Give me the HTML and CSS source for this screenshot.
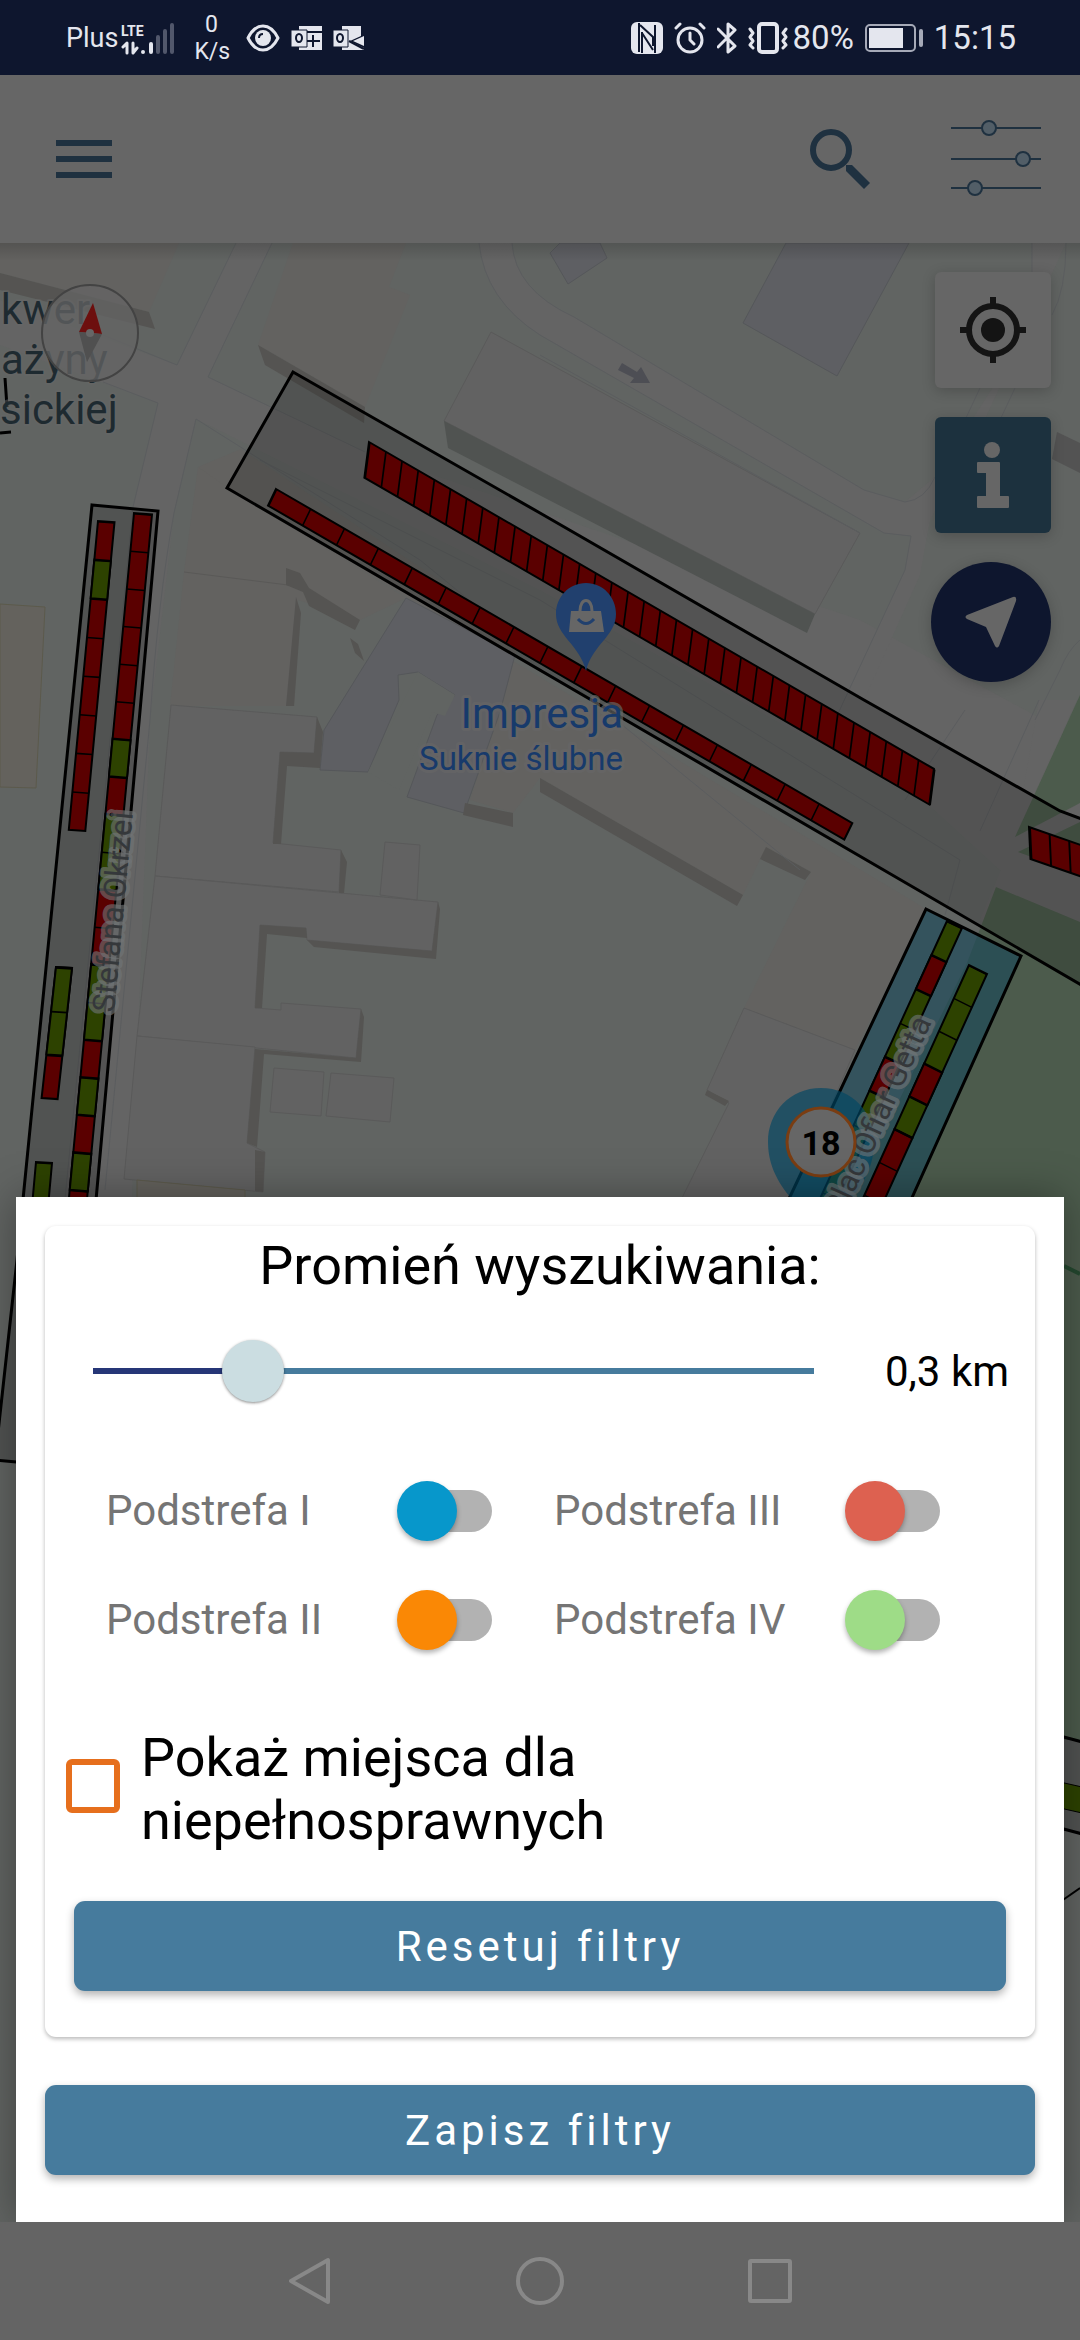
FILE: index.html
```html
<!DOCTYPE html>
<html lang="pl">
<head>
<meta charset="utf-8">
<meta name="viewport" content="width=device-width, initial-scale=1">
<title>Filtry</title>
<link rel="stylesheet" href="styles.css">
</head>
<body>
<div class="screen">
  <div class="status">
    <div class="status-group">
      <span class="carrier">Plus</span>
      <svg class="signal" width="56" height="34" viewBox="0 0 56 34" aria-hidden="true">
        <text x="0" y="15" class="lte">LTE</text>
        <path d="M6 32V22l-4 4M12 22v10l4-5" class="ico-line" stroke-width="3"/>
        <path d="M22 31v0M30 23v8" class="ico-line" stroke-width="4"/>
        <path d="M37 16v15M44 10v21M51 4v27" class="ico-line dim" stroke-width="4"/>
      </svg>
      <span class="speed">0<br>K/s</span>
      <svg class="eye" width="34" height="28" viewBox="0 0 34 28" aria-hidden="true">
        <path d="M2 14C10-2 24-2 32 14 24 30 10 30 2 14Z" class="ico-line" stroke-width="3"/>
        <circle cx="17" cy="14" r="8" fill="#e4e6ee"/>
        <path d="M13 14q0-4 4-4" fill="none" stroke="#0e162e" stroke-width="2"/>
      </svg>
      <svg width="31" height="26" viewBox="0 0 31 26" aria-hidden="true">
        <path d="M8 1h23v24H8z" fill="#e4e6ee"/>
        <path d="M15 7h16M22 10v12M16 16h13" stroke="#0e162e" stroke-width="2"/>
        <path d="M0 5h16v17H0z" fill="#e4e6ee" stroke="#0e162e"/>
        <ellipse cx="8" cy="13" rx="3" ry="4" fill="none" stroke="#0e162e" stroke-width="2"/>
      </svg>
      <svg width="31" height="26" viewBox="0 0 31 26" aria-hidden="true">
        <path d="M9 1h19v10l-11 5 14 7v2H9z" fill="#e4e6ee"/>
        <path d="M31 11v10l-11-5z" fill="#e4e6ee"/>
        <path d="M16 16l15 8" stroke="#0e162e" stroke-width="2"/>
        <path d="M0 5h15v17H0z" fill="#e4e6ee" stroke="#0e162e"/>
        <ellipse cx="7" cy="13" rx="3" ry="4" fill="none" stroke="#0e162e" stroke-width="2"/>
      </svg>
    </div>
    <div class="status-group">
      <svg width="32" height="32" viewBox="0 0 32 32" aria-hidden="true">
        <rect width="32" height="32" rx="6" fill="#e4e6ee"/>
        <path d="M8 1v29M9 3l13 12v9M11 10v21M11 11l11 17M24 31V3" fill="none" stroke="#0e162e" stroke-width="2"/>
      </svg>
      <svg width="32" height="32" viewBox="0 0 32 32" aria-hidden="true">
        <circle cx="16" cy="18" r="12" class="ico-line" stroke-width="3"/>
        <path d="M16 11v7l4 4M2 6l4-4M26 2l4 4" class="ico-line" stroke-width="3"/>
      </svg>
      <svg width="20" height="32" viewBox="0 0 20 32" aria-hidden="true">
        <path d="M1 7l17 17-7 6V2l7 6L1 25" class="ico-line" stroke-width="3"/>
      </svg>
      <svg width="40" height="32" viewBox="0 0 40 32" aria-hidden="true">
        <rect x="11" y="2" width="18" height="28" rx="3" class="ico-line" stroke-width="4"/>
        <path d="M2 7l3 4-3 4 3 4-3 4 3 3M38 7l-3 4 3 4-3 4 3 4-3 3" class="ico-line" stroke-width="3"/>
      </svg>
      <span class="percent">80%</span>
      <svg width="58" height="28" viewBox="0 0 58 28" aria-hidden="true">
        <rect x="1" y="1" width="49" height="26" rx="4" fill="none" stroke="#a6aab8" stroke-width="2"/>
        <rect x="4" y="4" width="34" height="20" fill="#e4e6ee"/>
        <rect x="54" y="5" width="4" height="18" rx="2" fill="#a6aab8"/>
      </svg>
      <time class="clock">15:15</time>
    </div>
  </div>

  <header class="appbar">
    <button class="icon-btn" aria-label="Menu">
      <svg width="56" height="38" viewBox="0 0 56 38"><path d="M0 0h56v6H0zM0 16h56v6H0zM0 32h56v6H0z" fill="#1f3140"/></svg>
    </button>
    <div class="appbar-actions">
      <button class="icon-btn" aria-label="Szukaj">
        <svg width="60" height="60" viewBox="0 0 60 60">
          <circle cx="21" cy="21" r="18" fill="none" stroke="#1f3140" stroke-width="6"/>
          <path d="M36 36h6l18 18-6 6-18-18z" fill="#1f3140"/>
        </svg>
      </button>
      <button class="icon-btn" aria-label="Filtry">
        <svg width="92" height="78" viewBox="0 0 92 78">
          <g fill="#525e67" stroke="#1f3140" stroke-width="2">
            <path d="M1 8h90M1 39h90M1 68h90"/>
            <circle cx="39" cy="8" r="7"/><circle cx="73" cy="39" r="7"/><circle cx="25" cy="68" r="7"/>
          </g>
        </svg>
      </button>
    </div>
  </header>

  <main class="map">
    <svg class="map-canvas" viewBox="0 243 1080 1979" preserveAspectRatio="xMidYMin slice" aria-hidden="true">
      <defs>
        <linearGradient id="barShade" x1="0" y1="0" x2="0" y2="1">
          <stop offset="0" stop-opacity=".15"/><stop offset="1" stop-opacity="0"/>
        </linearGradient>
      </defs>
      <rect y="243" width="1080" height="1979" fill="#616462"/>

      <!-- roads -->
      <g fill="#646464">
        <path d="M236 243L177 365 0 300V345L158 403 133 507 60 1250H130L150 720 174 513 196 419 540 590 930 806 1000 870 1080 915V740L860 620 365 452 208 377 272 243Z"/>
        <path d="M479 243Q485 300 540 335L884 533 911 536 905 570 835 720H855L920 575 930 520 980 430 1066 243H1032L1030 330 935 477 905 502 864 490 574 317Q515 290 512 243Z"/>
        <path d="M1039 700L1015 837 980 920 1080 960V803L1015 837 1077 700Z"/>
      </g>

      <!-- greenery -->
      <g fill="#4c5b4c">
        <path d="M996 887L1080 922V1740H1000L830 1240 967 963Z"/>
        <path d="M1080 695L1015 837 1080 803Z"/>
        <path d="M1080 822L1018 852 1080 875Z"/>
      </g>
      <path d="M1064 1266l16 8" stroke="#24482f" stroke-width="4"/>

      <!-- buildings -->
      <g fill="#636260">
        <path d="M0 243H179L149 312 0 273Z"/>
        <path d="M293 243H406L389 287 410 295 365 407 258 345Z"/>
        <path d="M198 467L241 449 470 600 520 640 470 800 513 813 540 778 743 895 766 847 811 872 744 1008 855 1050 926 909 228 490Z"/>
        <path d="M198 467L184 572 170 706 294 706 298 600 360 620 406 598 228 488Z"/>
      </g>
      <path d="M184 572L288 585" stroke="#5a5957"/>
      <g fill="#626262" stroke="#5a5a5a">
        <path d="M491 332L860 533 815 614 444 421Z"/>
        <path d="M171 705L317 717 314 753 280 752 273 843 341 850 339 892 155 876Z"/>
        <path d="M155 876L438 902 432 951 307 940 306 928 260 925 255 1008 281 1010 281 1003 361 1009 356 1058 137 1036Z"/>
        <path d="M137 1036L255 1047 247 1143 265 1152 263 1192 124 1179Z"/>
        <path d="M385 842l35 3-3 55-37-5zM274 1068l50 4-3 44-51-4zM331 1073l63 5-4 44-64-6z"/>
        <path d="M744 1008L855 1050 790 1200H681L729 1103 707 1090Z"/>
      </g>
      <path d="M0 604L45 607 36 788 0 787ZM137 1180L245 1190V1200H137Z" fill="#64625d" stroke="#5c5a4c"/>
      <g fill="#5e5f63" stroke="#55575a">
        <path d="M786 243H909L837 376 743 323ZM550 253L568 284 607 258 600 243H560Z"/>
        <path d="M406 598L515 655 500 712 464 813 407 797 437 715 455 695 418 672 398 675 399 700 368 772 320 770 324 730Z"/>
      </g>
      <path d="M418 672L455 695 445 716 432 712 399 790 368 772Z" fill="#616462"/>

      <!-- building sides -->
      <g fill="#555452">
        <path d="M0 273L149 312 155 329 0 290ZM258 345L365 407 364 423 265 365Z"/>
        <path d="M286 568L300 573 309 588 360 620 355 630 309 606 303 592 286 585ZM350 638L358 644 364 661 355 653Z"/>
        <path d="M296 597L301 613 294 706H286Z"/>
        <path d="M465 803L513 813V827L463 815ZM540 778L743 895 737 906 540 792ZM766 847L811 872 805 880 760 859Z"/>
        <path d="M280 752L314 753 317 717 323 732 320 768 287 766 281 844H273ZM341 850L347 862 344 893H339Z"/>
        <path d="M260 925L306 928 307 938 267 934 262 1008H255ZM307 940L432 951 438 902 440 909 436 959 314 947ZM255 1049L356 1058 361 1009 364 1017 361 1062 264 1054 257 1147 247 1143ZM255 1150L265 1152 263 1192 255 1191ZM707 1090l22 11-4 5-20-11z"/>
      </g>
      <path d="M444 421L815 614 807 633 448 448Z" fill="#505351"/>
      <path d="M1057 432l23 11v30l-28-14z" fill="#535353"/>

      <!-- kerbs -->
      <g fill="none" stroke="#5b5d5f">
        <path d="M236 243L177 365 103 335M272 243L208 377 365 452M103 382L158 403 133 507 60 1250M196 419L174 513Q158 600 150 720L105 1190"/>
        <path d="M196 419L420 560 800 870M260 460L540 600 960 860 945 915M965 710L905 800M1039 700L980 831"/>
        <path d="M479 243Q485 300 540 335L884 533 911 536 905 570 835 720M512 243Q515 290 574 317L864 490 905 502Q925 500 935 477M1032 243V300M1066 243Q1066 290 1052 315M980 388L965 420M1015 388L1000 420M1080 640Q1068 650 1060 670L1035 720M540 355L860 533"/>
      </g>
      <path d="M622 363l15 9 4-5 9 16-20 0 4-5-16-8z" fill="#4d4e54"/>

      <!-- parking zones -->
      <g stroke="#000" stroke-width="3" fill="rgba(0,0,0,.16)">
        <path d="M293 372L540 513 864 700 1060 811 1090 822V990L624 719 227 488Z"/>
        <path d="M92 505L158 511 72 1467-5 1460 17 1260Z"/>
        <path d="M5 378l2 29M0 433l11-1" fill="none"/>
        <path d="M1060 1736l30 8v92l-30-8z"/>
        <path d="M1060 1902l20-14" fill="none" stroke-width="2"/>
      </g>
      <path d="M926 909L1021 956 901 1222H778Z" fill="rgba(20,70,90,.58)" stroke="#000" stroke-width="3"/>

      <!-- parking bays: one local unit is one bay -->
      <g class="bays" transform="matrix(16.14 9.34 -4.6 35.6 369 442)">
        <path class="red" d="M0 0H35V1H0Z"/><path class="ticks" d="M0 .5H35.1"/>
      </g>
      <g class="bays" transform="matrix(33.9 19.65 -8 16.5 276 489)">
        <path class="red" d="M0 0H17V1H0Z"/><path class="ticks fine" d="M0 .5H17"/>
      </g>
      <g class="bays" transform="matrix(19.6 6.8 1.5 32 1029 827)">
        <path class="red" d="M0 0H3V1H0Z"/><path class="ticks" d="M0 .5H3.1"/>
      </g>
      <g class="bays" transform="matrix(-3.65 38.6 16.5 1.2 98 521)">
        <path class="red" d="M0 0H8V1H0Z"/><path class="green" d="M1 0H2V1H1Z"/><path class="ticks fine" d="M0 .5H8"/>
      </g>
      <g class="bays" transform="matrix(-4.8 43.7 16 1 56 967)">
        <path class="red" d="M0 0H3V1H0Z"/><path class="green" d="M0 0H2V1H0Z"/><path class="ticks fine" d="M0 .5H3"/>
      </g>
      <g class="bays" transform="matrix(-3.6 40 16 1 36 1162)">
        <path class="green" d="M0 0H2V1H0Z"/><path class="ticks fine" d="M0 .5H2"/>
      </g>
      <g class="bays" transform="matrix(-3.57 37.6 18 1.5 134 513)">
        <path class="red" d="M0 0H20V1H0Z"/>
        <path class="green" d="M6 0H7V1H6ZM8 0H10V1H8ZM12 0H14V1H12ZM15 0H16V1H15ZM17 0H18V1H17Z"/>
        <path class="ticks fine" d="M0 .5H20"/>
      </g>
      <g class="bays" transform="matrix(-15.5 33.9 15 7 947 921)">
        <path class="green" d="M0 0H9V1H0Z"/><path class="red" d="M1 0H2V1H1ZM4 0H5V1H4Z"/><path class="ticks fine" d="M0 .5H9"/>
      </g>
      <g class="bays" transform="matrix(-14.9 32.8 18 9 969 965)">
        <path class="green" d="M0 0H5V1H0Z"/><path class="red" d="M3 0H4V1H3ZM5 0H8V1H5Z"/><path class="ticks fine" d="M0 .5H8"/>
      </g>
      <path d="M1060 1782l22 5v26l-22-5z" fill="#2d4200" stroke="#000"/>

      <!-- places -->
      <path d="M821 1088C790 1088 768 1112 768 1142 768 1172 785 1190 792 1200L821 1250 850 1200C858 1190 874 1172 874 1142 874 1112 852 1088 821 1088Z" fill="rgba(0,70,100,.65)"/>
      <g class="street">
        <text transform="translate(114 1013) rotate(-84.6)">Stefana Okrzei</text>
        <text transform="translate(932 1022) rotate(-65.5)" text-anchor="end">Plac Ofiar Getta</text>
      </g>
      <circle cx="821" cy="1142" r="34" fill="#666" stroke="#7a3d12" stroke-width="3"/>
      <text x="821" y="1155" class="count" text-anchor="middle">18</text>

      <path d="M586 583C569 583 556 597 556 614 556 636 580 645 586 671 592 645 616 636 616 614 616 597 603 583 586 583Z" fill="#21406e"/>
      <path d="M571 611h30l3 21h-35z" fill="#666"/>
      <path d="M580 611c0-14 12-14 12 0" fill="none" stroke="#666" stroke-width="3"/>
      <path d="M578 619q8 9 16 0" fill="none" stroke="#21406e" stroke-width="3"/>
      <g class="poi" text-anchor="end">
        <text x="623" y="728" font-size="42">Impresja</text>
        <text x="623" y="770" font-size="33">Suknie ślubne</text>
      </g>
      <g class="square">
        <text x="1" y="324">kwer</text>
        <text x="1" y="374">ażyny</text>
        <text x="0" y="424">sickiej</text>
      </g>

      <circle cx="90" cy="333" r="48" fill="rgba(100,100,100,.75)" stroke="#434343" stroke-width="2"/>
      <path d="M93 303L79 332 102 334Z" fill="#6d0f0e"/>
      <path d="M79 332L102 334 87 362Z" fill="#505050"/>
      <circle cx="90" cy="333" r="4" fill="#666"/>
      <rect y="243" width="1080" height="18" fill="url(#barShade)"/>
    </svg>

    <div class="map-tools">
      <button class="tool tool-locate" aria-label="Moja lokalizacja">
        <svg width="66" height="66" viewBox="0 0 66 66">
          <circle cx="33" cy="33" r="24" fill="none" stroke="#141414" stroke-width="6"/>
          <circle cx="33" cy="33" r="12" fill="#141414"/>
          <path d="M30 0h6v8h-6zM30 58h6v8h-6zM0 30h8v6H0zM58 30h8v6h-8z" fill="#141414"/>
        </svg>
      </button>
      <button class="tool tool-info" aria-label="Informacje">
        <svg width="32" height="66" viewBox="0 0 32 66">
          <circle cx="15" cy="8" r="8" fill="#666"/>
          <path d="M1 20h21q1 0 1 1v33h8q1 0 1 1v10q0 1-1 1H1q-1 0-1-1V55q0-1 1-1h8V31H1q-1 0-1-1v-9q0-1 1-1z" fill="#666"/>
        </svg>
      </button>
      <button class="tool tool-navigate" aria-label="Nawiguj">
        <svg width="52" height="52" viewBox="0 0 52 52">
          <path d="M2 19L48 1q4-1 3 4L34 50q-2 3-4 0L21 31 2 23q-3-2 0-4z" fill="#666"/>
        </svg>
      </button>
    </div>

    <form class="sheet" onsubmit="return false">
      <section class="card">
        <h1 class="title"><label for="radius">Promień wyszukiwania:</label></h1>
        <div class="radius">
          <input class="slider" id="radius" type="range" min="0.1" max="1" step="0.1" value="0.3">
          <output class="radius-value" for="radius">0,3 km</output>
        </div>
        <div class="zones">
          <label class="zone">Podstrefa I <input class="switch blue" type="checkbox" role="switch"></label>
          <label class="zone">Podstrefa III <input class="switch coral" type="checkbox" role="switch"></label>
          <label class="zone">Podstrefa II <input class="switch orange" type="checkbox" role="switch"></label>
          <label class="zone">Podstrefa IV <input class="switch lime" type="checkbox" role="switch"></label>
        </div>
        <label class="disabled-places">
          <input class="tick" type="checkbox">
          <span>Pokaż miejsca dla<br>niepełnosprawnych</span>
        </label>
        <button class="btn btn-reset" type="reset">Resetuj filtry</button>
      </section>
      <button class="btn" type="submit">Zapisz filtry</button>
    </form>
  </main>

  <nav class="navbar">
    <button class="icon-btn" aria-label="Wstecz"><svg width="48" height="48" viewBox="0 0 48 48"><path d="M42 3v42L5 24z" class="nav-line"/></svg></button>
    <button class="icon-btn" aria-label="Ekran główny"><svg width="48" height="48" viewBox="0 0 48 48"><circle cx="24" cy="24" r="22" class="nav-line"/></svg></button>
    <button class="icon-btn" aria-label="Ostatnie"><svg width="48" height="48" viewBox="0 0 48 48"><rect x="4" y="4" width="40" height="40" rx="1" class="nav-line"/></svg></button>
  </nav>
</div>
</body>
</html>
```

FILE: styles.css
```css
* { box-sizing: border-box; }

body {
  margin: 0;
  font-family: Roboto, "Noto Sans", sans-serif;
  background: #646464;
}

button {
  border: 0;
  padding: 0;
  background: none;
  font: inherit;
}

svg { display: block; }

.screen {
  display: flex;
  flex-direction: column;
  min-height: 100vh;
}

/* system status bar */
.status {
  display: flex;
  align-items: center;
  justify-content: space-between;
  height: 75px;
  padding: 0 64px 0 66px;
  background: #0e162e;
  color: #e4e6ee;
}

.status-group {
  display: flex;
  align-items: center;
  gap: 11px;
}

.carrier { font-size: 27px; }
.signal { margin-left: -8px; }
.speed {
  width: 34px;
  margin-left: 6px;
  font-size: 23px;
  line-height: 27px;
  text-align: center;
}
.eye { margin-left: 7px; }
.percent { margin-left: -6px; font-size: 33px; }
.clock { font-size: 33px; }
.lte { font-size: 14px; font-weight: 700; fill: #e4e6ee; }

.ico-line {
  fill: none;
  stroke: #e4e6ee;
  stroke-linecap: round;
  stroke-linejoin: round;
}
.dim { stroke: #51576b; }

/* application bar */
.appbar {
  display: flex;
  align-items: center;
  justify-content: space-between;
  height: 168px;
  padding: 0 38px 0 56px;
  background: #666;
}

.appbar-actions {
  display: flex;
  align-items: center;
  gap: 80px;
}

/* map */
.map {
  position: relative;
  display: flex;
  flex: 1;
  flex-direction: column;
  justify-content: space-between;
  gap: 48px;
  overflow: hidden;
}

.map-canvas {
  position: absolute;
  inset: 0;
  width: 100%;
  height: 100%;
}

.bays .red { fill: #5a0000; }
.bays .green { fill: #2d4200; }
.bays .red, .bays .green {
  stroke: #000;
  stroke-width: 2px;
  vector-effect: non-scaling-stroke;
}
.ticks {
  fill: none;
  stroke: #000;
  stroke-dasharray: .1 .9;
}
.ticks.fine { stroke-dasharray: .04 .96; }

.street text, .poi text, .square text {
  paint-order: stroke;
  stroke-linejoin: round;
}
.street text {
  font-size: 31px;
  fill: #35383b;
  stroke: rgba(112, 116, 118, .65);
  stroke-width: 8px;
}
.poi text {
  fill: #173a6b;
  stroke: rgba(102, 102, 102, .7);
  stroke-width: 6px;
}
.square text {
  font-size: 42px;
  fill: #1e2a30;
  stroke: rgba(102, 102, 102, .5);
  stroke-width: 4px;
}
.count { font-size: 34px; font-weight: 700; }

.map-tools {
  position: relative;
  display: flex;
  flex-direction: column;
  align-items: flex-end;
  gap: 29px;
  padding: 29px;
}

.tool {
  display: grid;
  place-items: center;
  width: 116px;
  height: 116px;
  border-radius: 6px;
  box-shadow: 0 3px 14px rgba(0, 0, 0, .2);
}
.tool-locate { background: #666; }
.tool-info { background: #1c313e; }
.tool-navigate {
  width: 120px;
  height: 120px;
  border-radius: 50%;
  background: #0e162e;
}

/* filter sheet */
.sheet {
  position: relative;
  display: flex;
  flex-direction: column;
  gap: 48px;
  margin: 0 16px;
  padding: 29px 29px 47px;
  background: #fff;
  box-shadow: 0 0 40px rgba(0, 0, 0, .35);
}

.card {
  display: flex;
  flex-direction: column;
  padding: 8px 0 46px;
  border-radius: 11px;
  box-shadow: 0 2px 4px rgba(0, 0, 0, .28);
}

.title {
  margin: 0;
  font-size: 54px;
  font-weight: 400;
  line-height: 64px;
  text-align: center;
}

.radius {
  display: flex;
  align-items: center;
  gap: 40px;
  margin-top: 42px;
  padding: 0 26px 0 17px;
}

.slider {
  flex: 1;
  min-width: 0;
  height: 62px;
  margin: 0;
  appearance: none;
  background: none;
}
.slider::-webkit-slider-runnable-track {
  height: 6px;
  background: linear-gradient(to right,
    transparent 31px, #263677 31px,
    #263677 25%, #467b9d 25%,
    #467b9d calc(100% - 31px), transparent calc(100% - 31px));
}
.slider::-webkit-slider-thumb {
  width: 62px;
  height: 62px;
  margin-top: -28px;
  appearance: none;
  border-radius: 50%;
  background: #cbdde1;
  box-shadow: 0 1px 3px rgba(0, 0, 0, .45);
}
.radius-value {
  padding-top: 2px;
  font-size: 42px;
  line-height: 60px;
}

.zones {
  display: grid;
  grid-template-columns: 1fr 1fr;
  gap: 49px 62px;
  margin-top: 79px;
  padding: 0 95px 0 61px;
}

.zone {
  display: flex;
  align-items: center;
  justify-content: space-between;
  height: 60px;
  color: #757575;
  font-size: 42px;
  line-height: 60px;
}

.switch {
  display: flex;
  align-items: center;
  width: 95px;
  height: 60px;
  margin: 0;
  appearance: none;
}
.switch::before {
  content: "";
  z-index: 1;
  width: 60px;
  height: 60px;
  border-radius: 50%;
  background: var(--thumb);
  box-shadow: 0 3px 5px rgba(0, 0, 0, .3);
}
.switch::after {
  content: "";
  width: 83px;
  height: 42px;
  margin-left: -48px;
  border-radius: 21px;
  background: #b2b2b2;
}
.blue { --thumb: #0797cb; }
.orange { --thumb: #fa8805; }
.coral { --thumb: #dd6150; }
.lime { --thumb: #9edc87; }

.disabled-places {
  display: flex;
  align-items: center;
  gap: 21px;
  margin: 76px 21px 0;
  font-size: 54px;
  line-height: 63px;
}

.tick {
  width: 54px;
  height: 54px;
  margin: 0 0 6px;
  appearance: none;
  border: 6px solid #e66f1d;
  border-radius: 6px;
}

.btn {
  height: 90px;
  border-radius: 11px;
  background: #467b9d;
  box-shadow: 0 4px 8px rgba(0, 0, 0, .3);
  color: #fff;
  font-size: 42px;
  letter-spacing: 4px;
}
.btn-reset { margin: 49px 29px 0; }

/* system navigation */
.navbar {
  display: flex;
  align-items: center;
  justify-content: center;
  gap: 182px;
  height: 118px;
  background: #646464;
}
.nav-line {
  fill: none;
  stroke: #888;
  stroke-width: 4px;
  stroke-linejoin: round;
}
```
